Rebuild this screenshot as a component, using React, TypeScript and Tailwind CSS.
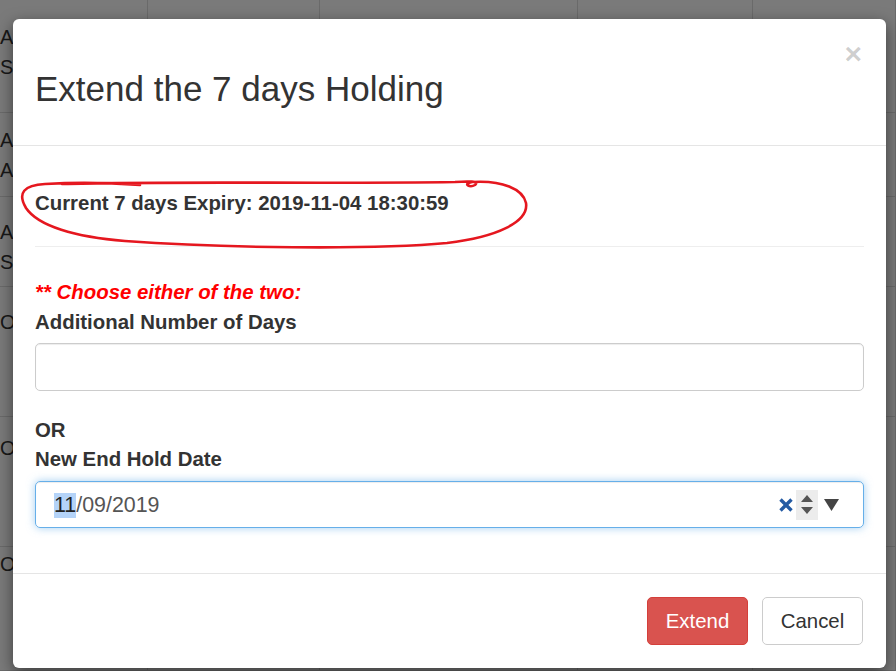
import React from 'react';

const cols = [148, 172, 258, 175, 143];

// first letters of the table cells that peek out from under the modal
const rows = [
    { h: 113, pt: 22, lines: ['A', 'S'] },
    { h: 84, pt: 12, lines: ['A', 'A'] },
    { h: 90, pt: 20, lines: ['A', 'S'] },
    { h: 130, pt: 20, lines: ['O'] },
    { h: 130, pt: 16, lines: ['O'] },
    { h: 124, pt: 2, lines: ['O'] },
];

function BackgroundTable() {
    return (
        <div className="bg-white text-[20px] leading-[30px] text-[#333]">
            {rows.map((row, i) => (
                <div key={i} className="flex border-b border-[#dddddd]" style={{ height: row.h }}>
                    {cols.map((w, j) => (
                        <div
                            key={j}
                            className="border-r border-[#dddddd]"
                            style={{ width: w, paddingTop: row.pt }}
                        >
                            {j === 0 && row.lines.map((l, k) => <div key={k}>{l}</div>)}
                        </div>
                    ))}
                </div>
            ))}
        </div>
    );
}

function Annotation() {
    return (
        <svg
            className="absolute left-0 top-0 pointer-events-none"
            width="896"
            height="671"
            viewBox="0 0 896 671"
        >
            <path
                d="M62 184 C 160 181, 330 184, 455 182 C 468 181, 480 181, 475 185 C 470 188, 462 184, 472 182 C 502 180, 523 189, 526 203 C 529 222, 497 237, 447 243 C 370 250, 220 248, 125 241 C 75 237, 38 226, 26 208 C 17 193, 24 185, 45 184 C 62 183, 100 182, 140 185"
                fill="none"
                stroke="#e5171f"
                strokeWidth="2.6"
                strokeLinecap="round"
                strokeLinejoin="round"
            />
        </svg>
    );
}

function DateControls() {
    return (
        <div className="flex items-center">
            <svg width="16" height="16" viewBox="0 0 16 16" className="mr-[2px]">
                <path d="M2.5 2.5 L13.5 13.5 M13.5 2.5 L2.5 13.5" stroke="#235aa3" strokeWidth="3.4" strokeLinecap="butt" />
            </svg>
            <div className="flex h-[30px] w-[22px] flex-col items-center justify-center gap-[5px] bg-[#ececec]">
                <svg width="12" height="7" viewBox="0 0 12 7">
                    <path d="M6 0 L12 7 L0 7 Z" fill="#555" />
                </svg>
                <svg width="12" height="7" viewBox="0 0 12 7">
                    <path d="M0 0 L12 0 L6 7 Z" fill="#555" />
                </svg>
            </div>
            <svg width="15" height="12" viewBox="0 0 15 12" className="ml-[6px]">
                <path d="M0 0 L15 0 L7.5 12 Z" fill="#444" />
            </svg>
        </div>
    );
}

export default function App() {
    return (
        <div className="relative h-[671px] w-[896px] overflow-hidden font-['Liberation_Sans',Arial,sans-serif]">
            <BackgroundTable />
            <div className="absolute inset-0 bg-black/[0.52]" />

            {/* modal */}
            <div className="absolute left-[13px] top-[19px] w-[873px] rounded-[6px] bg-white shadow-[0_5px_15px_rgba(0,0,0,0.5)]">
                <div className="flex items-start justify-between border-b border-[#e5e5e5] px-[22px] pt-[20px] pb-[37px]">
                    <h3 className="mt-[31px] text-[35px] leading-[38px] text-[#333]">Extend the 7 days Holding</h3>
                    <button className="mr-[2px] text-[30px] font-bold leading-[30px] text-black/20">×</button>
                </div>

                <div className="px-[22px] pt-[43px] pb-[45px] text-[20.4px] leading-[28px] text-[#333]">
                    <p className="font-bold">Current 7 days Expiry: 2019-11-04 18:30:59</p>
                    <hr className="mt-[29px] border-t border-[#eeeeee]" />

                    <p className="mt-[31px] font-bold italic text-[#ff0000]">** Choose either of the two:</p>
                    <label className="mt-[2px] block font-bold">Additional Number of Days</label>
                    <div className="mt-[7px] h-[48px] rounded-[5px] border border-[#cccccc] shadow-[inset_0_1px_1px_rgba(0,0,0,0.075)]" />

                    <p className="mt-[25px] font-bold">OR</p>
                    <label className="mt-[1px] block font-bold">New End Hold Date</label>
                    <div className="mt-[8px] flex h-[47px] items-center justify-between rounded-[5px] border border-[#66afe9] pl-[18px] pr-[24px] shadow-[inset_0_1px_1px_rgba(0,0,0,0.075),0_0_8px_rgba(102,175,233,0.6)]">
                        <span className="text-[21.4px] text-[#555]">
                            <span className="inline-block h-[25px] bg-[#b4d3f8] leading-[25px] text-[#222]">11</span>
                            /09/2019
                        </span>
                        <DateControls />
                    </div>
                </div>

                <div className="flex justify-end gap-[14px] border-t border-[#e5e5e5] px-[23px] py-[23px] text-[20.4px]">
                    <button className="h-[48px] w-[101px] rounded-[5px] border border-[#d43f3a] bg-[#d9534f] text-white">
                        Extend
                    </button>
                    <button className="h-[48px] w-[101px] rounded-[5px] border border-[#cccccc] bg-white text-[#333]">
                        Cancel
                    </button>
                </div>
            </div>

            <Annotation />
        </div>
    );
}
